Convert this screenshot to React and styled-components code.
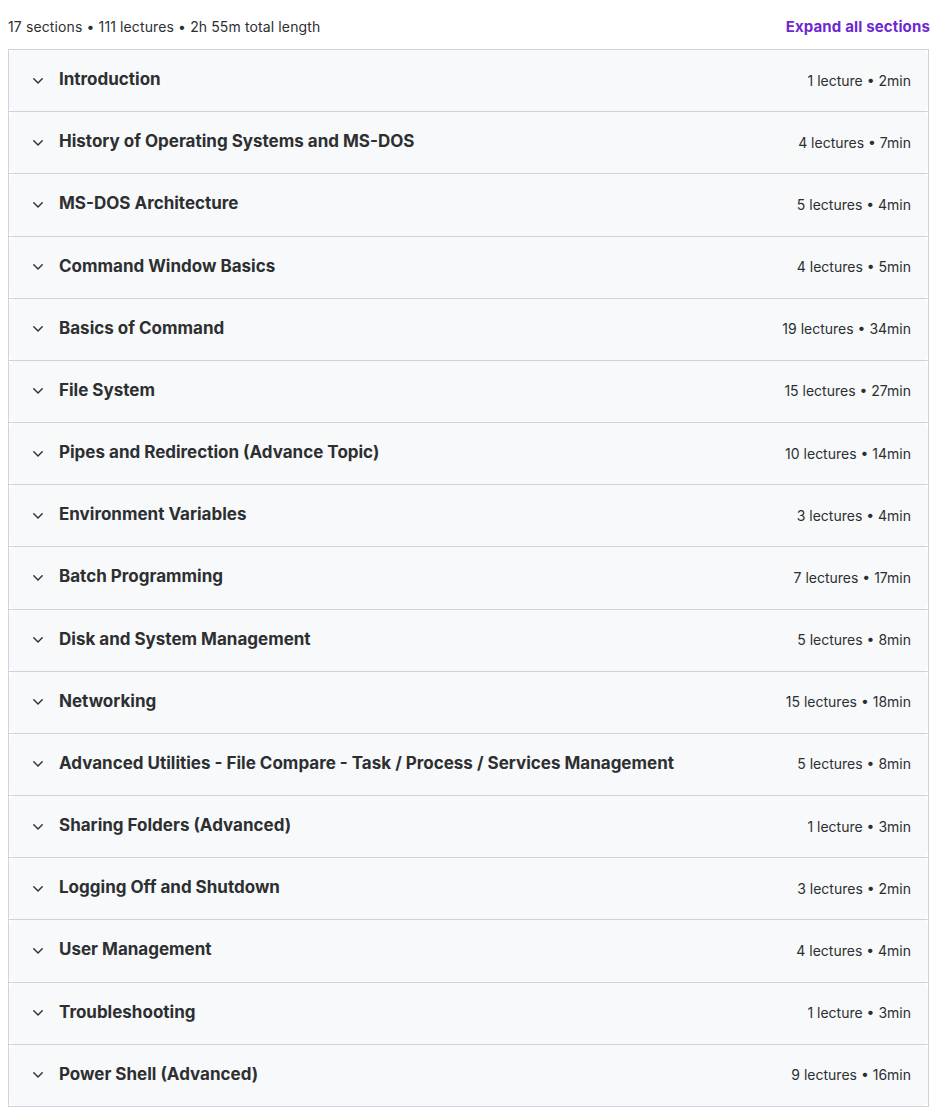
import styled, { createGlobalStyle } from "styled-components";

const GlobalStyle = createGlobalStyle`
  body {
    margin: 0;
    background: #ffffff;
    font-family: Inter, "Noto Sans", "Liberation Sans", sans-serif;
    color: #2d2f31;
  }
`;

const sections = [
  ["Introduction", "1 lecture • 2min"],
  ["History of Operating Systems and MS-DOS", "4 lectures • 7min"],
  ["MS-DOS Architecture", "5 lectures • 4min"],
  ["Command Window Basics", "4 lectures • 5min"],
  ["Basics of Command", "19 lectures • 34min"],
  ["File System", "15 lectures • 27min"],
  ["Pipes and Redirection (Advance Topic)", "10 lectures • 14min"],
  ["Environment Variables", "3 lectures • 4min"],
  ["Batch Programming", "7 lectures • 17min"],
  ["Disk and System Management", "5 lectures • 8min"],
  ["Networking", "15 lectures • 18min"],
  [
    "Advanced Utilities - File Compare - Task / Process / Services Management",
    "5 lectures • 8min",
  ],
  ["Sharing Folders (Advanced)", "1 lecture • 3min"],
  ["Logging Off and Shutdown", "3 lectures • 2min"],
  ["User Management", "4 lectures • 4min"],
  ["Troubleshooting", "1 lecture • 3min"],
  ["Power Shell (Advanced)", "9 lectures • 16min"],
];

function App() {
  return (
    <Page>
      <GlobalStyle />
      <TopBar>
        <Summary>17 sections • 111 lectures • 2h 55m total length</Summary>
        <ExpandButton>Expand all sections</ExpandButton>
      </TopBar>
      <Accordion>
        {sections.map(([title, meta], i) => (
          <Section key={title} $first={i === 0}>
            <SectionHeader>
              <Chevron viewBox="0 0 10 6" aria-hidden="true">
                <path d="M0.8 0.8 L5 5 L9.2 0.8" />
              </Chevron>
              <Title>{title}</Title>
              <Meta>{meta}</Meta>
            </SectionHeader>
          </Section>
        ))}
      </Accordion>
    </Page>
  );
}

export default App;

const Page = styled.div`
  padding: 0 8px;
`;

const TopBar = styled.div`
  display: flex;
  justify-content: space-between;
  align-items: center;
  padding-top: 17px;
  margin-bottom: 12px;
  line-height: 20px;
`;

const Summary = styled.span`
  font-size: 14px;
  letter-spacing: 0.12px;
  color: #2d2f31;
`;

const ExpandButton = styled.button`
  border: none;
  background: none;
  padding: 0;
  margin-right: -1px;
  font-family: inherit;
  font-size: 15px;
  letter-spacing: 0.15px;
  font-weight: 700;
  line-height: 20px;
  color: #6d28d2;
  cursor: pointer;
`;

const Accordion = styled.div`
  border: 1px solid #d1d2e0;
`;

const Section = styled.div`
  border-top: ${(p) => (p.$first ? "none" : "1px solid #d1d2e0")};
`;

const SectionHeader = styled.div`
  display: flex;
  align-items: center;
  height: 61.18px;
  box-sizing: border-box;
  padding: 0 17px 0 24px;
  background: #f7f9fa;
  border-radius: 6px;
  cursor: pointer;
`;

const Chevron = styled.svg`
  width: 10px;
  height: 6px;
  flex: none;
  margin-right: 16px;
  fill: none;
  stroke: #2d2f31;
  stroke-width: 1.4;
  stroke-linecap: round;
  stroke-linejoin: round;
`;

const Title = styled.h3`
  flex: 1;
  margin: 0 0 3px;
  font-size: 17px;
  font-weight: 700;
  line-height: 20px;
  color: #2d2f31;
`;

const Meta = styled.span`
  font-size: 14px;
  line-height: 20px;
  color: #2d2f31;
`;
